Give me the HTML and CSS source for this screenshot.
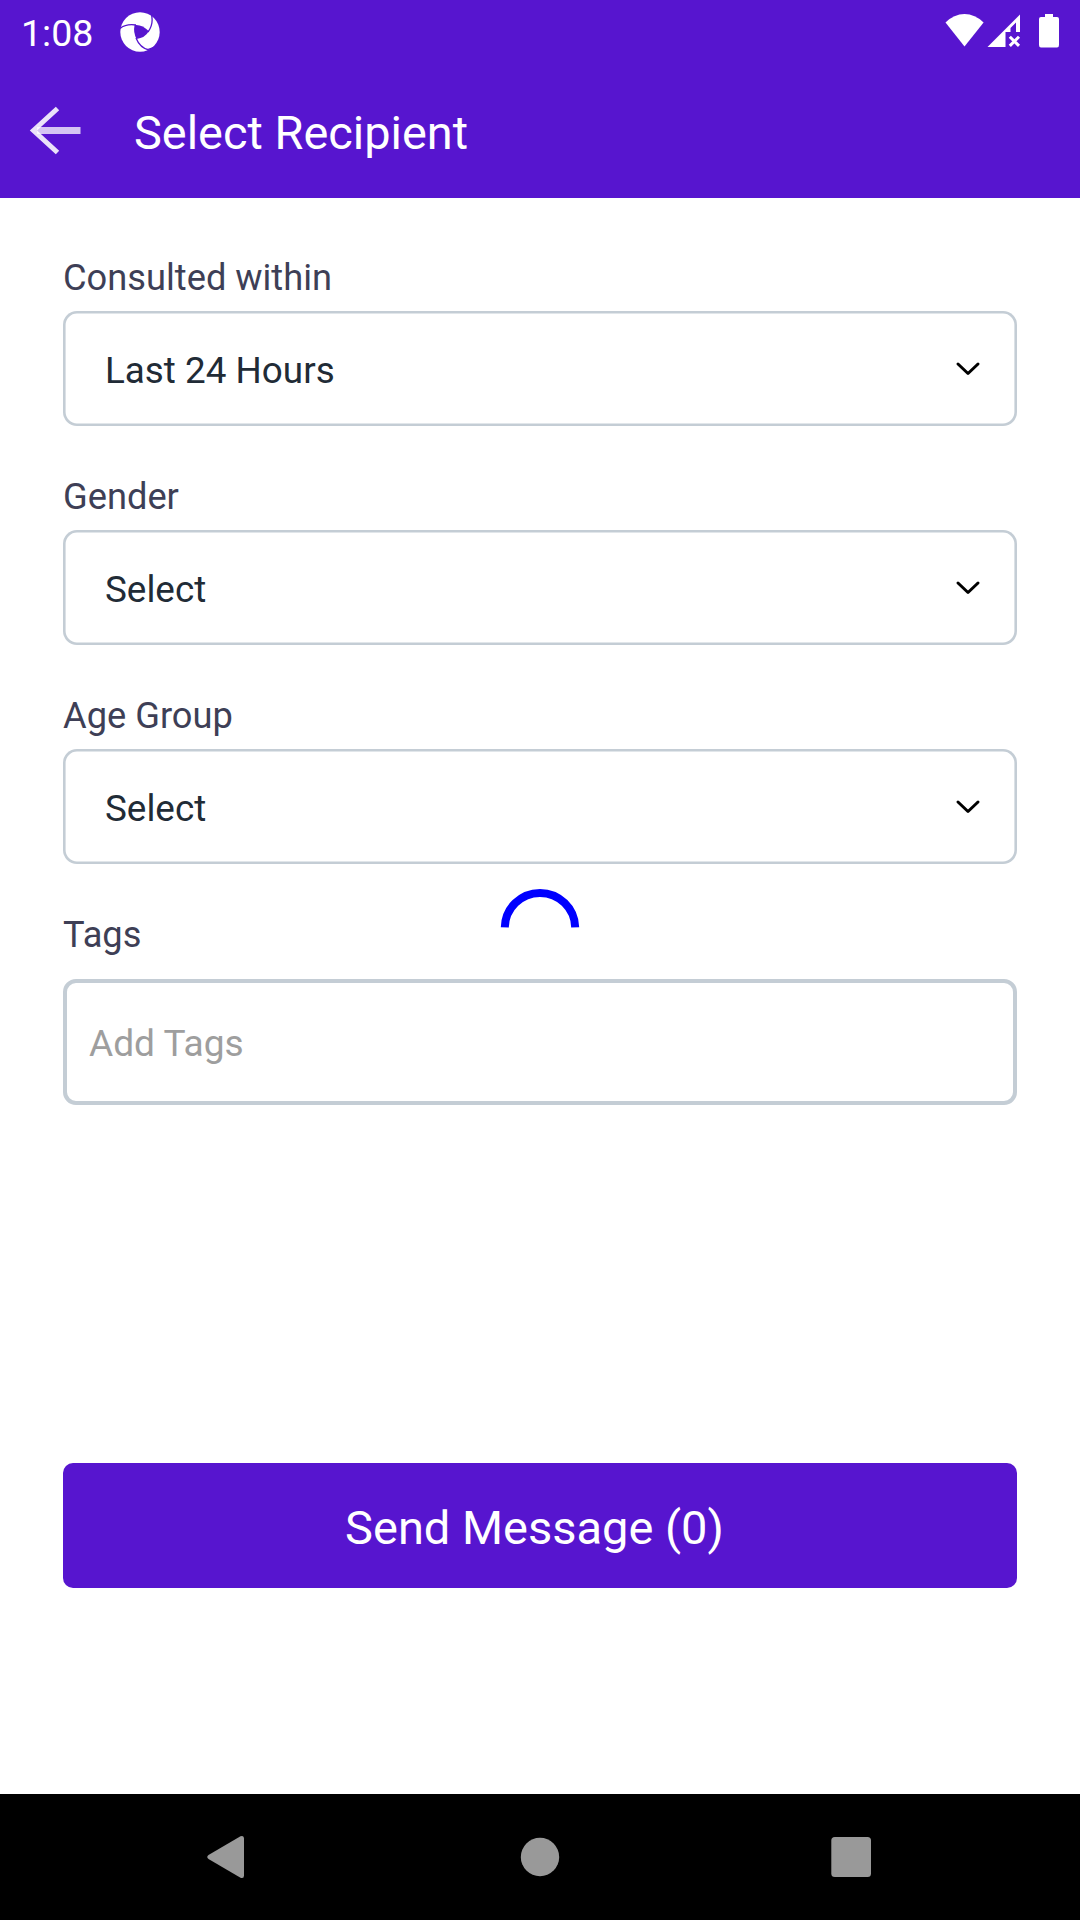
FILE: index.html
```html
<!DOCTYPE html>
<html lang="en">
<head>
<meta charset="utf-8">
<title>Select Recipient</title>
<link rel="stylesheet" href="styles.css">
</head>
<body>
<div class="screen">
  <div class="status-bar">
    <span class="clock">1:08</span>
    <svg class="app-icon" width="40" height="40" viewBox="0 0 40 40">
      <circle cx="20" cy="20" r="19.700" fill="#fff"/>
      <path d="M14.600 13Q22 12 28.800 19.300Q25 26 16.500 27Q13 20 14.600 13Z" fill="#5715cf"/>
      <path d="M0 16.500Q6 11.500 16 13M28 20Q34 12 31.300 2M16 26Q20 36 29 38M27 37.800Q33 36 39 33" fill="none" stroke="#5715cf" stroke-width="1.300"/>
    </svg>
    <svg class="signals" width="116" height="36" viewBox="0 0 116 36" fill="#fff">
      <path d="M0.500 9.500Q9 1 19.500 1T38.600 9.500L19.500 33.500Z"/>
      <path d="M42.500 34L75 1.500V19H71V9.500L65.500 15V19H60.500V34Z"/>
      <path d="M64.800 23.700L74 32.900M74 23.700L64.800 32.900" stroke="#fff" stroke-width="3"/>
      <path d="M100 1H108V4H112Q114 4 114 6V32Q114 34.500 112 34.500H96Q94 34.500 94 32V6Q94 4 96 4H100Z"/>
    </svg>
  </div>
  <header class="app-bar">
    <svg class="back" width="52" height="50" viewBox="0 0 52 50" fill="none" stroke="#fff">
      <path d="M8 24.500H51.500" stroke-width="7" stroke-opacity=".75"/>
      <path d="M28.500 2.500L4.500 24.500L28.500 46.500" stroke-width="5" stroke-opacity=".88"/>
    </svg>
    <h1 class="title">Select Recipient</h1>
  </header>
  <main class="content">
    <div class="field">
      <span class="label">Consulted within</span>
      <div class="select"><span class="value">Last 24 Hours</span>
        <svg width="26" height="16" viewBox="0 0 26 16"><path d="M3 3L13 12.500L23 3" class="chevron"/></svg></div>
    </div>
    <div class="field">
      <span class="label">Gender</span>
      <div class="select"><span class="value">Select</span>
        <svg width="26" height="16" viewBox="0 0 26 16"><path d="M3 3L13 12.500L23 3" class="chevron"/></svg></div>
    </div>
    <div class="field">
      <span class="label">Age Group</span>
      <div class="select"><span class="value">Select</span>
        <svg width="26" height="16" viewBox="0 0 26 16"><path d="M3 3L13 12.500L23 3" class="chevron"/></svg></div>
    </div>
    <div class="field tags">
      <span class="label">Tags</span>
      <div class="tag-input"><span class="placeholder">Add Tags</span></div>
    </div>
    <button class="send"><span class="send-text">Send Message (0)</span></button>
    <svg class="spinner" width="80" height="48" viewBox="0 0 80 48">
      <path d="M4.800 42.300A35.210 35.210 0 0 1 75.200 42.300" fill="none" stroke="#00f" stroke-width="8"/>
    </svg>
  </main>
  <nav class="nav-bar">
    <svg width="126" height="126" viewBox="0 0 126 126"><path d="M47.500 61Q45 63 47.500 65L79.500 83.700Q83 85 83 81.500V44.500Q83 41 79.500 42.300Z" fill="#999"/></svg>
    <svg width="126" height="126" viewBox="0 0 126 126"><circle cx="63" cy="63" r="19.200" fill="#999"/></svg>
    <svg width="126" height="126" viewBox="0 0 126 126"><rect x="43.300" y="43" width="39.700" height="40" rx="3.500" fill="#999"/></svg>
  </nav>
</div>
</body>
</html>
```
FILE: styles.css
```css
* { box-sizing: border-box; }
body { margin: 0; background: #fff; font-family: Roboto, sans-serif; }
.screen { width: 1080px; height: 1920px; display: flex; flex-direction: column; background: #fff; }
.status-bar { height: 63px; display: flex; align-items: flex-start; background: #5715cf; color: #fff; padding: 0 21px; }
.clock { width: 99px; font-size: 37.500px; line-height: 44px; padding-top: 11px; }
.app-icon { margin-top: 12px; }
.signals { margin: 13px 0 0 auto; transform: translateX(2px); }
.app-bar { height: 135px; display: flex; align-items: center; gap: 53px; background: #5715cf; color: #fff; padding: 0 29px; }
.title { margin: 4px 0 0; font-size: 46.900px; font-weight: 400; line-height: 56px; }
.content { position: relative; flex: 1; display: flex; flex-direction: column; padding: 57px 63px 0; }
.field { display: flex; flex-direction: column; height: 219px; }
.label { height: 56px; line-height: 46px; font-size: 36.250px; color: #3e3f56; }
.select { display: flex; align-items: center; justify-content: space-between; height: 115px; padding: 0 36px 0 42px; border-radius: 14px; box-shadow: inset 0 0 0 2.600px #c4cdd5; }
.value { font-size: 36.850px; line-height: 44px; padding-top: 5px; color: #212b36; }
.chevron { fill: none; stroke: #000; stroke-width: 3px; stroke-linecap: round; stroke-linejoin: round; }
.tags { height: 194px; }
.tags .label { height: 67px; }
.tag-input { height: 126px; display: flex; align-items: center; padding-left: 22px; border: 4px solid #c4cdd5; border-radius: 13px; }
.placeholder { color: #9e9e9e; font-size: 37.100px; line-height: 44px; padding-top: 3px; }
.send { margin-top: 357px; height: 125px; border: 0; padding: 0 11px 0 0; border-radius: 10px; background: #5715cf; color: #fff; font: 400 47px/56px Roboto, sans-serif; }
.send-text { display: block; padding-top: 5px; }
.spinner { position: absolute; left: 500px; top: 687px; }
.nav-bar { height: 126px; display: flex; background: #000; padding: 0 166px 0 161px; justify-content: space-between; }
.nav-bar svg:nth-child(2) { margin-left: 5px; }
```
